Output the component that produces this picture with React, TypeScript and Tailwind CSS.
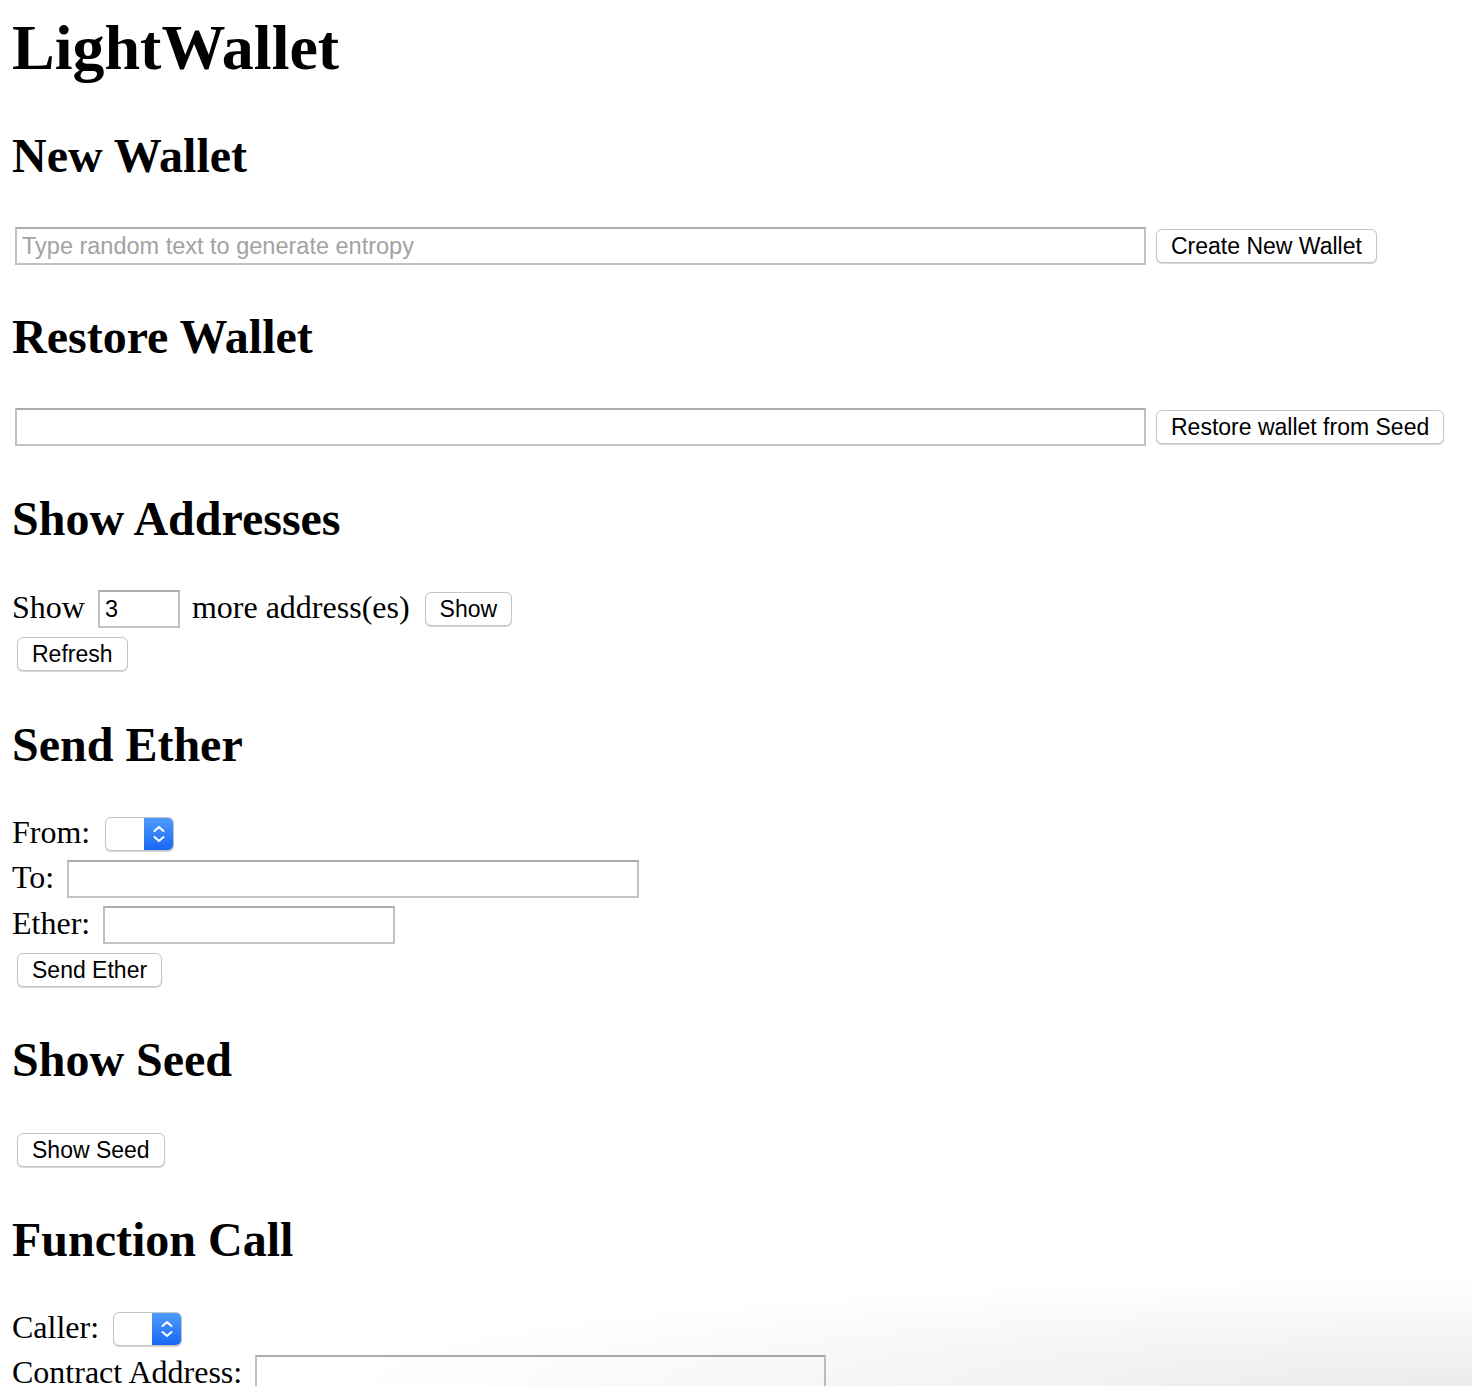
import React from "react";

const sans = "font-['Liberation_Sans',Arial,sans-serif]";

function Btn({ children, className = "" }: { children: React.ReactNode; className?: string }) {
  return (
    <button
      className={`h-[34px] shrink-0 rounded-[6px] border border-[#c4c4c4] bg-white px-[14px] text-[23px] leading-none text-black shadow-[0_1px_1px_rgba(0,0,0,0.18)] ${sans} ${className}`}
    >
      {children}
    </button>
  );
}

function Field({ className = "", placeholder, value }: { className?: string; placeholder?: string; value?: string }) {
  return (
    <input
      readOnly
      defaultValue={value}
      placeholder={placeholder}
      className={`h-[38px] shrink-0 border-2 border-[#c2c2c2] border-t-[#acacac] bg-white px-[5px] text-[23.5px] text-black outline-none placeholder:text-[#a2a2a2] ${sans} ${className}`}
    />
  );
}

function Picker({ className = "" }: { className?: string }) {
  return (
    <div
      className={`flex h-[34px] w-[69px] shrink-0 overflow-hidden rounded-[6px] border border-[#c4c4c4] bg-white shadow-[0_1px_1px_rgba(0,0,0,0.18)] ${className}`}
    >
      <div className="flex-1" />
      <div className="flex w-[29px] items-center justify-center bg-gradient-to-b from-[#4f9bfd] to-[#1767f2]">
        <svg width="14" height="26" viewBox="0 0 14 26" fill="none" stroke="white" strokeWidth="2" strokeLinecap="round" strokeLinejoin="round">
          <path d="M2.5 10 L7 6 L11.5 10" />
          <path d="M2.5 16 L7 20 L11.5 16" />
        </svg>
      </div>
    </div>
  );
}

function H2({ children, className = "" }: { children: React.ReactNode; className?: string }) {
  return <h2 className={`text-[48px] font-bold leading-[56px] ${className}`}>{children}</h2>;
}

// labels sit a touch above the control's centre, as in the original
function Label({ children, className = "" }: { children: React.ReactNode; className?: string }) {
  return <span className={`shrink-0 pb-[5px] ${className}`}>{children}</span>;
}

export default function App() {
  return (
    <div className="relative h-[1386px] overflow-hidden bg-white text-black font-['Liberation_Serif','Times_New_Roman',serif]">
      <div className="pl-[12px]">
        <h1 className="mt-[11px] text-[64px] font-bold leading-[74px]">LightWallet</h1>

        <H2 className="mt-[43px]">New Wallet</H2>
        <div className="mt-[43px] flex items-center pl-[3px]">
          <Field className="w-[1131px]" placeholder="Type random text to generate entropy" />
          <Btn className="ml-[10px]">Create New Wallet</Btn>
        </div>

        <H2 className="mt-[44px]">Restore Wallet</H2>
        <div className="mt-[43px] flex items-center pl-[3px]">
          <Field className="w-[1131px]" />
          <Btn className="ml-[10px]">Restore wallet from Seed</Btn>
        </div>

        <H2 className="mt-[45px]">Show Addresses</H2>
        <div className="mt-[43px] flex h-[38px] items-center text-[32px] leading-[38px]">
          <Label>Show</Label>
          <Field className="ml-[13px] w-[82px]" value="3" />
          <Label className="ml-[12px]">more address(es)</Label>
          <Btn className="ml-[15px]">Show</Btn>
        </div>
        <Btn className="ml-[5px] mt-[9px]">Refresh</Btn>

        <H2 className="mt-[46px]">Send Ether</H2>
        <div className="mt-[42px] flex h-[38px] items-center text-[32px] leading-[38px]">
          <Label>From:</Label>
          <Picker className="ml-[15px]" />
        </div>
        <div className="mt-[7px] flex h-[38px] items-center text-[32px] leading-[38px]">
          <Label>To:</Label>
          <Field className="ml-[13px] w-[572px]" />
        </div>
        <div className="mt-[8px] flex h-[38px] items-center text-[32px] leading-[38px]">
          <Label>Ether:</Label>
          <Field className="ml-[13px] w-[292px]" />
        </div>
        <Btn className="ml-[5px] mt-[9px]">Send Ether</Btn>

        <H2 className="mt-[45px]">Show Seed</H2>
        <Btn className="ml-[5px] mt-[45px]">Show Seed</Btn>

        <H2 className="mt-[45px]">Function Call</H2>
        <div className="mt-[42px] flex h-[38px] items-center text-[32px] leading-[38px]">
          <Label>Caller:</Label>
          <Picker className="ml-[14px]" />
        </div>
        <div className="mt-[7px] flex h-[38px] items-center text-[32px] leading-[38px]">
          <Label>Contract Address:</Label>
          <Field className="ml-[13px] w-[571px]" />
        </div>
      </div>
      <div className="pointer-events-none absolute bottom-0 right-0 h-[110px] w-[1150px] bg-[radial-gradient(ellipse_100%_100%_at_100%_100%,rgba(0,0,0,0.08),rgba(0,0,0,0.03)_60%,transparent)]" />
    </div>
  );
}
